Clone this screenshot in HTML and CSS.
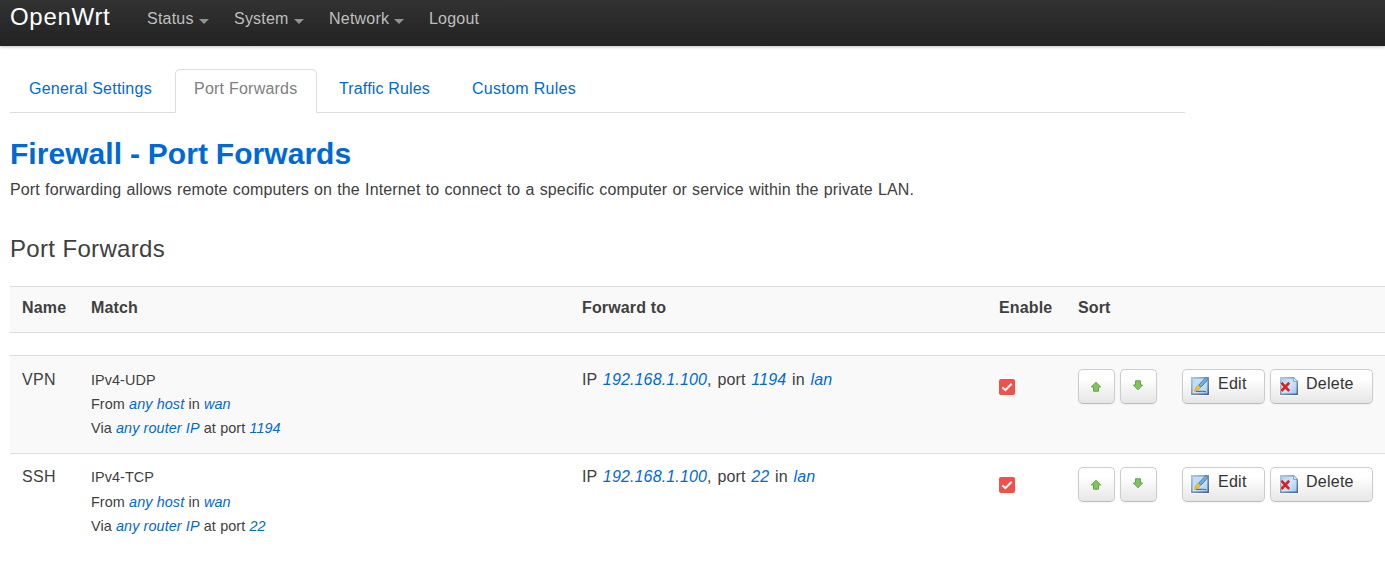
FILE: index.html
```html
<!DOCTYPE html>
<html lang="en">
<head>
<meta charset="utf-8">
<title>OpenWrt - Firewall - Port Forwards</title>
<link rel="stylesheet" href="styles.css">
</head>
<body>
<svg class="defs" width="0" height="0" aria-hidden="true">
  <defs>
    <linearGradient id="blue" x1="0" y1="0" x2="1" y2="1"><stop offset="0" stop-color="#a5cdf2"/><stop offset=".5" stop-color="#d0e8fd"/><stop offset="1" stop-color="#8ec5f8"/></linearGradient>
    <linearGradient id="frame" x1="0" y1="0" x2="1" y2="1"><stop offset="0" stop-color="#a9c5e5"/><stop offset="1" stop-color="#4d6285"/></linearGradient>
    <symbol id="up" viewBox="0 0 12 12"><path d="M6 1.2 10.6 6H8.5v4.2h-5V6H1.4z" fill="#83c45a" stroke="#62a549" stroke-linejoin="round"/></symbol>
    <symbol id="down" viewBox="0 0 12 12"><path d="M6 9.8 10.6 5H8.5V.8h-5V5H1.4z" fill="#83c45a" stroke="#62a549" stroke-linejoin="round"/></symbol>
    <symbol id="edit" viewBox="0 0 20 20"><path d="M.5.5h19v19H.5z" fill="#fff"/><rect x="1.8" y="1.8" width="16.4" height="16.4" fill="url(#blue)" stroke="url(#frame)" stroke-width="1.6"/><path d="M3 3h10L3 14z" fill="#c2dcf5"/><path d="M6 15.5c4 .2 7-.8 10 .3" fill="none" stroke="#456c96" stroke-width="1.1"/><path d="m8.6 9.2 7.3-7.8 2.1 2-7.1 7.8z" fill="#70afe5" stroke="#356797" stroke-width=".8"/><path d="m8.2 9.1 2.6 2.4-3.2 3.2-3.1.9.7-3z" fill="#f5bd32" stroke="#bf8e28" stroke-width=".6"/></symbol>
    <symbol id="delete" viewBox="0 0 20 20"><path d="M.5.5h15.3l3.7 3.7v15.3H.5z" fill="#fff"/><path d="M1.7 1.7h12.8l3.8 3.8v12.8H1.7z" fill="url(#blue)" stroke="url(#frame)" stroke-width="1.4"/><path d="M14.5 1.7v3.8h3.8" fill="#dceeff" stroke="#78a9dc"/><path d="m2.2 6.8 8 8.3M10.2 6.8l-8 8.3" stroke="#fff" stroke-opacity=".7" stroke-width="4"/><path d="m2.3 6.8 7.9 8.2M10.2 6.8 2.3 15" stroke="#d62323" stroke-width="2.8"/></symbol>
  </defs>
</svg>
<header class="topbar">
  <a class="brand">OpenWrt</a>
  <nav class="menu"><a class="status caret">Status</a><a class="system caret">System</a><a class="network caret">Network</a><a>Logout</a></nav>
</header>
<main>
  <nav class="tabs"><a class="tab general">General Settings</a><a class="tab active">Port Forwards</a><a class="tab traffic">Traffic Rules</a><a class="tab custom">Custom Rules</a></nav>
  <h2><span>Firewall - Port Forwards</span></h2>
  <p class="description"><span>Port forwarding allows remote computers on the Internet to connect to a specific computer or service within the private LAN.</span></p>
  <h3><span>Port Forwards</span></h3>
  <section class="table">
    <div class="row head"><b>Name</b><b>Match</b><b>Forward to</b><b>Enable</b><b>Sort</b><b></b></div>
    <div class="row rule shaded">
      <div class="name">VPN</div>
      <div class="match"><div class="protocol">IPv4-UDP</div><div>From <i>any host</i> in <i>wan</i></div><div>Via <i>any router IP</i> at port <i>1194</i></div></div>
      <div class="target">IP <i>192.168.1.100</i>, port <i>1194</i> in <i>lan</i></div>
      <div class="enable"><span class="check"><svg width="16" height="16" viewBox="0 0 16 16"><path d="m3.3 8.2 3.1 3 6.3-6.4" fill="none" stroke="#fff" stroke-width="2"/></svg></span></div>
      <div class="actions sort"><a class="button"><svg width="12" height="12"><use href="#up"/></svg></a><a class="button move-down"><svg width="12" height="12"><use href="#down"/></svg></a></div>
      <div class="actions"><a class="button edit"><svg width="20" height="20"><use href="#edit"/></svg><span>Edit</span></a><a class="button delete"><svg width="20" height="20"><use href="#delete"/></svg><span>Delete</span></a></div>
    </div>
    <div class="row rule last">
      <div class="name">SSH</div>
      <div class="match"><div class="protocol">IPv4-TCP</div><div>From <i>any host</i> in <i>wan</i></div><div>Via <i>any router IP</i> at port <i>22</i></div></div>
      <div class="target">IP <i>192.168.1.100</i>, port <i>22</i> in <i>lan</i></div>
      <div class="enable"><span class="check"><svg width="16" height="16" viewBox="0 0 16 16"><path d="m3.3 8.2 3.1 3 6.3-6.4" fill="none" stroke="#fff" stroke-width="2"/></svg></span></div>
      <div class="actions sort"><a class="button"><svg width="12" height="12"><use href="#up"/></svg></a><a class="button move-down"><svg width="12" height="12"><use href="#down"/></svg></a></div>
      <div class="actions"><a class="button edit"><svg width="20" height="20"><use href="#edit"/></svg><span>Edit</span></a><a class="button delete"><svg width="20" height="20"><use href="#delete"/></svg><span>Delete</span></a></div>
    </div>
  </section>
</main>
</body>
</html>
```
FILE: styles.css
```css
* { box-sizing: border-box; }
body { margin: 0; background: #fff; color: #404040; font: 16px/24px "Liberation Sans", Arial, sans-serif; overflow: hidden; height: 578px; }
.defs { display: block; }
.topbar { height: 46px; display: flex; padding-left: 10px; background: linear-gradient(#323232, #222); box-shadow: 0 1px 3px rgba(0,0,0,.25); }
.brand { width: 137px; color: #fff; font-size: 24px; line-height: 34px; letter-spacing: .7px; }
.menu { display: flex; line-height: 38px; color: #bfbfbf; letter-spacing: .22px; }
.menu a { display: flex; }
.status { width: 87px; }
.system { width: 95px; }
.network { width: 100px; }
.caret::after { content: ""; margin: 19px 0 0 5px; width: 0; height: 0; border: 5px solid transparent; border-top-color: #929292; border-bottom: 0; }
main { padding: 23px 0 0 10px; }
.tabs { width: 1175px; height: 44px; display: flex; border-bottom: 1px solid #ddd; color: #0069d6; letter-spacing: .23px; }
.tab { height: 44px; padding: 8px 0 0 19px; white-space: nowrap; }
.general { width: 165px; }
.active { width: 142px; padding-left: 18px; border: 1px solid #ddd; border-bottom-color: #fff; border-radius: 5px 5px 0 0; background: #fff; color: #808080; padding-top: 7px; }
.traffic { padding-left: 22px; width: 136px; letter-spacing: .15px; }
.custom { letter-spacing: .3px; }
h2, h3, p { margin: 0; }
h2 { margin-top: 23px; font-size: 30px; line-height: 36px; color: #0069d6; word-spacing: -.5px; letter-spacing: .04px; }
.description { margin-top: 6px; letter-spacing: .15px; word-spacing: .55px; }
h3 { margin-top: 29px; font-size: 24px; line-height: 36px; font-weight: normal; letter-spacing: .34px; }
.table { margin-top: 19px; }
.row { display: grid; grid-template-columns: 69px 491px 417px 79px 104px 203px; padding-left: 12px; border-top: 1px solid #ddd; }
.head { height: 47px; padding-top: 9px; border-bottom: 1px solid #ddd; margin-bottom: 22px; background: #f9f9f9; letter-spacing: .15px; }
.rule { height: 98px; padding-top: 12px; }
.shaded { background: #f9f9f9; }
i { color: #0069d6; }
.name { letter-spacing: .3px; }
.match { font-size: 14.4px; letter-spacing: .08px; word-spacing: .1px; }
.target { letter-spacing: .15px; word-spacing: 1.1px; }
.last .name, .last .target { margin-top: -1px; }
.last .protocol { height: 25px; margin-top: -1px; }
.enable { padding-top: 11px; }
.check { display: block; width: 16px; height: 16px; border-radius: 2px; background: #f0524b; }
.check svg { display: block; }
.actions { display: flex; gap: 5px; padding-top: 1px; }
.button { width: 37px; height: 35px; display: flex; align-items: center; justify-content: center; padding-right: 1px; border: 1px solid #ccc; border-bottom-color: #bbb; border-radius: 5px; background: linear-gradient(#fff 25%, #e6e6e6); color: #333; box-shadow: 0 1px 2px rgba(0,0,0,.05); }
.move-down { padding-bottom: 1px; }
.edit, .delete { align-items: flex-start; justify-content: flex-start; padding: 6px 0 0 7px; letter-spacing: .25px; }
.edit { width: 83px; }
.delete { width: 103px; padding-left: 8px; }
.edit span, .delete span { line-height: 16px; margin-left: 8px; }
.delete span { margin-left: 7px; }
```
